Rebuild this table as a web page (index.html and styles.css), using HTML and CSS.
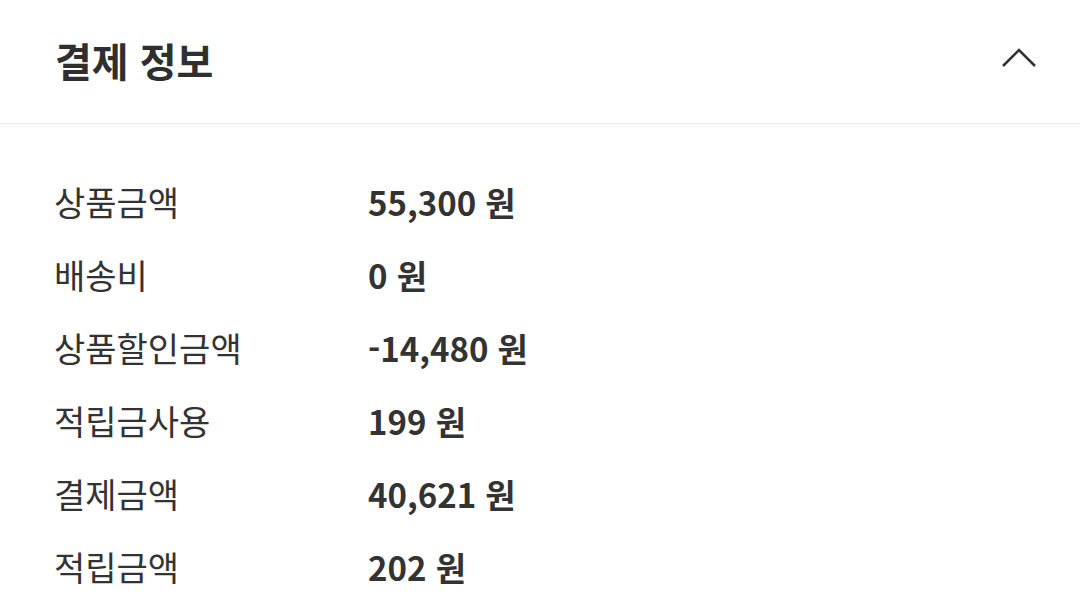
FILE: index.html
```html
<!DOCTYPE html>
<html lang="ko">
<head>
    <meta charset="UTF-8">
    <meta name="viewport" content="width=device-width, initial-scale=1.0">
    <title>결제 정보</title>
    <link rel="stylesheet" href="styles.css">
</head>
<body>
    <div class="payHeader">
        <h2 class="payTitle">결제 정보</h2>
        <button class="toggleBtn" aria-label="접기">
            <svg width="36" height="20" viewBox="0 0 36 20">
                <path d="M2 18 L18 2 L34 18" fill="none" stroke="#333" stroke-width="2.6"/>
            </svg>
        </button>
    </div>

    <div class="payList">
        <div class="payRow">
            <span class="payLabel">상품금액</span>
            <span class="payValue">55,300 원</span>
        </div>
        <div class="payRow">
            <span class="payLabel">배송비</span>
            <span class="payValue">0 원</span>
        </div>
        <div class="payRow">
            <span class="payLabel">상품할인금액</span>
            <span class="payValue">-14,480 원</span>
        </div>
        <div class="payRow">
            <span class="payLabel">적립금사용</span>
            <span class="payValue">199 원</span>
        </div>
        <div class="payRow">
            <span class="payLabel">결제금액</span>
            <span class="payValue">40,621 원</span>
        </div>
        <div class="payRow">
            <span class="payLabel">적립금액</span>
            <span class="payValue">202 원</span>
        </div>
    </div>
</body>
</html>
```

FILE: styles.css
```css
*{
    margin: 0px;
    padding: 0px;
    box-sizing: border-box;
}
body{
    width: 1080px;
    height: 616px;
    overflow: hidden;
    background-color: white;
    color: #333;
    font-family: "Noto Sans CJK KR", "Noto Sans", sans-serif;
}
.payHeader{
    display: flex;
    align-items: center;
    justify-content: space-between;
    height: 124px;
    padding: 0 43px 0 55px;
    border-bottom: 1px solid #ececec;
}
.payTitle{
    font-size: 40px;
    font-weight: 700;
    color: #2f2f2f;
    margin-top: -3px;
}
.toggleBtn{
    border: none;
    background: none;
    display: flex;
    margin-top: -8px;
}
.payList{
    padding: 41px 0 0 54px;
}
.payRow{
    display: flex;
    align-items: center;
    height: 73px;
}
.payLabel{
    width: 314px;
    font-size: 34px;
    color: #333;
}
.payValue{
    font-size: 33px;
    font-weight: 700;
    color: #333;
}
```
